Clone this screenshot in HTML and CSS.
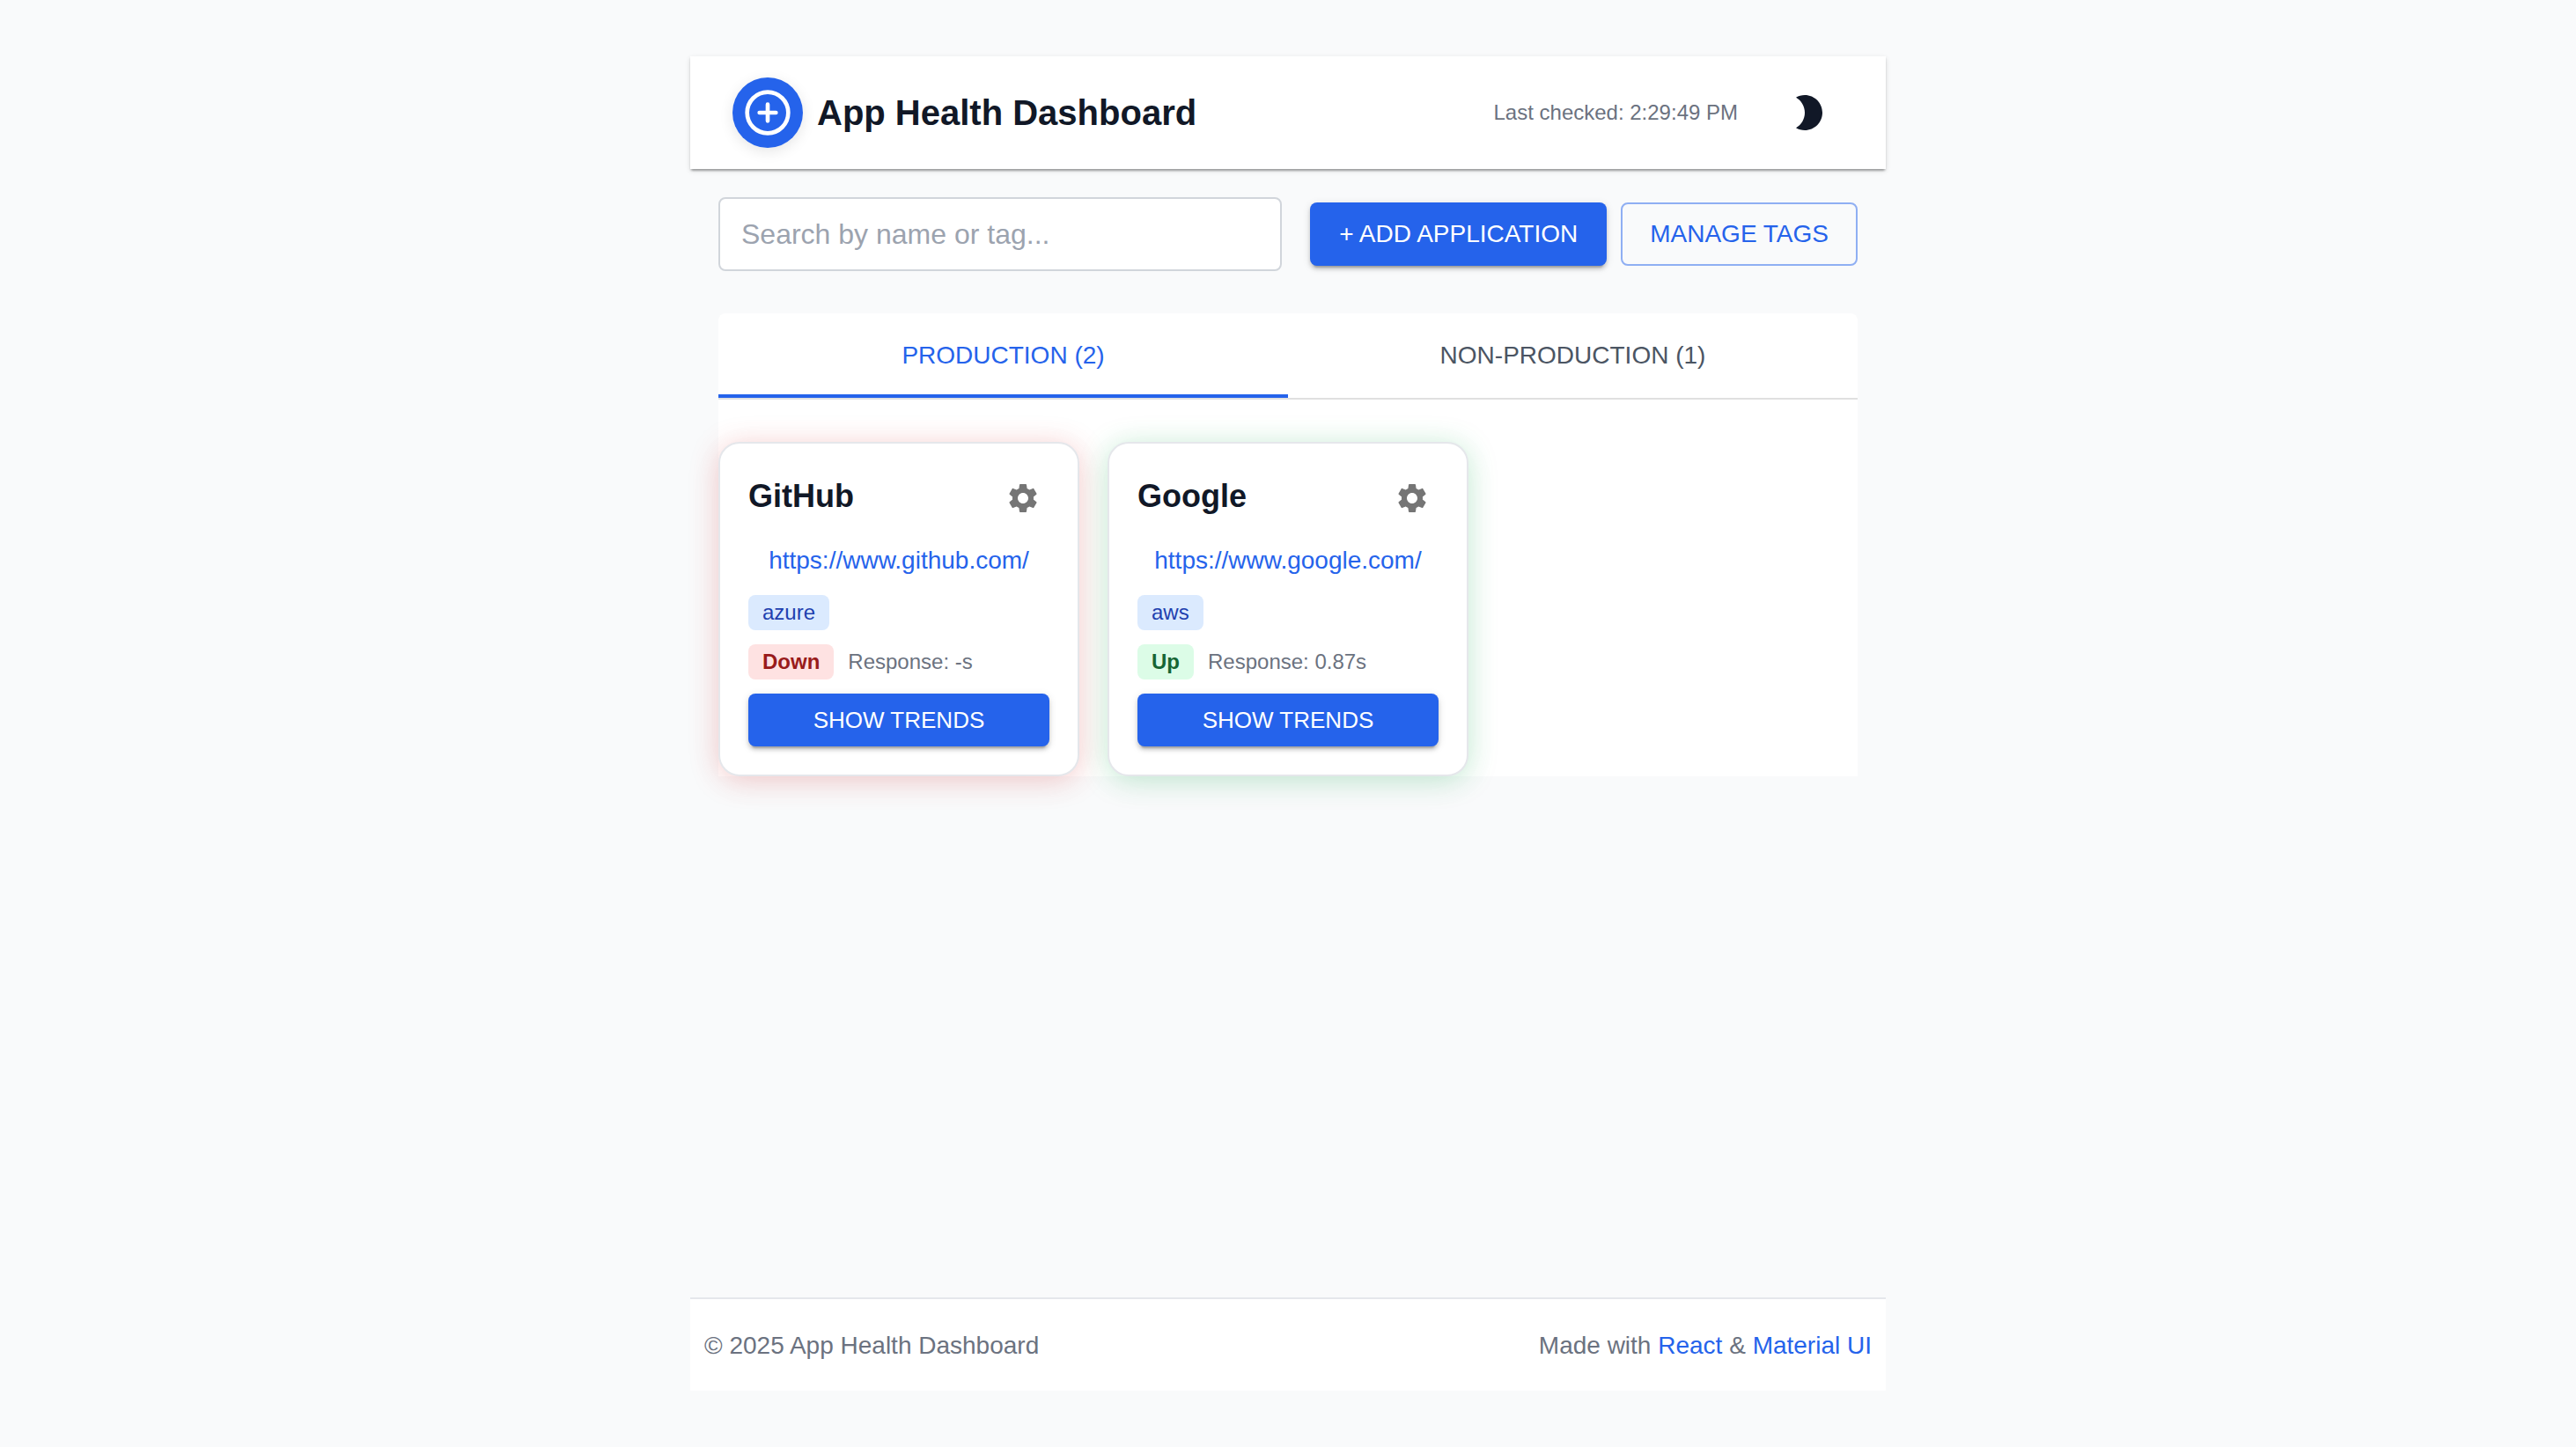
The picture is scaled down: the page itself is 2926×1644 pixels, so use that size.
FILE: index.html
```html
<!DOCTYPE html>
<html lang="en">
<head>
  <meta charset="utf-8">
  <meta name="viewport" content="width=device-width, initial-scale=1">
  <title>App Health Dashboard</title>
  <link rel="stylesheet" href="styles.css">
</head>
<body>
  <div class="app">
    <header class="app-bar">
      <div class="brand">
        <span class="brand-logo">
          <svg class="brand-icon" viewBox="0 0 24 24" fill="none" stroke="currentColor" stroke-width="2" stroke-linecap="round" aria-hidden="true">
            <circle cx="12" cy="12" r="10"/>
            <path d="M12 8v8M8 12h8"/>
          </svg>
        </span>
        <h1 class="brand-title">App Health Dashboard</h1>
      </div>
      <div class="app-bar-status">
        <span class="last-checked">Last checked: 2:29:49 PM</span>
        <button class="icon-button" type="button" aria-label="Toggle dark mode">
          <svg class="icon" viewBox="0 0 24 24" fill="currentColor" aria-hidden="true">
            <path d="M10 2c-1.82 0-3.53.5-5 1.35C7.99 5.08 10 8.3 10 12s-2.01 6.92-5 8.65C6.47 21.5 8.18 22 10 22c5.52 0 10-4.48 10-10S15.52 2 10 2z"/>
          </svg>
        </button>
      </div>
    </header>

    <main class="content">
      <div class="toolbar">
        <input class="search" type="search" placeholder="Search by name or tag..." aria-label="Search by name or tag">
        <div class="toolbar-actions">
          <button class="button button-contained" type="button">+ ADD APPLICATION</button>
          <button class="button button-outlined" type="button">MANAGE TAGS</button>
        </div>
      </div>

      <section class="panel">
        <div class="tabs" role="tablist">
          <button class="tab tab-selected" type="button" role="tab" aria-selected="true">PRODUCTION (2)</button>
          <button class="tab" type="button" role="tab" aria-selected="false">NON-PRODUCTION (1)</button>
        </div>

        <div class="cards" role="tabpanel">
          <article class="card card-down">
            <div class="card-header">
              <h2 class="card-title">GitHub</h2>
              <button class="icon-button icon-button-small" type="button" aria-label="GitHub settings">
                <svg class="icon icon-small" viewBox="0 0 24 24" fill="currentColor" aria-hidden="true">
                  <path d="M19.14 12.94c.04-.3.06-.61.06-.94 0-.32-.02-.64-.07-.94l2.03-1.58c.18-.14.23-.41.12-.61l-1.92-3.32c-.12-.22-.37-.29-.59-.22l-2.39.96c-.5-.38-1.03-.7-1.62-.94l-.36-2.54c-.04-.24-.24-.41-.48-.41h-3.84c-.24 0-.43.17-.47.41l-.36 2.54c-.59.24-1.13.57-1.62.94l-2.39-.96c-.22-.08-.47 0-.59.22L2.74 8.87c-.12.21-.08.47.12.61l2.03 1.58c-.05.3-.09.63-.09.94s.02.64.07.94l-2.03 1.58c-.18.14-.23.41-.12.61l1.92 3.32c.12.22.37.29.59.22l2.39-.96c.5.38 1.03.7 1.62.94l.36 2.54c.05.24.24.41.48.41h3.84c.24 0 .44-.17.47-.41l.36-2.54c.59-.24 1.13-.56 1.62-.94l2.39.96c.22.08.47 0 .59-.22l1.92-3.32c.12-.22.07-.47-.12-.61l-2.01-1.58zM12 15.6c-1.98 0-3.6-1.62-3.6-3.6s1.62-3.6 3.6-3.6 3.6 1.62 3.6 3.6-1.62 3.6-3.6 3.6z"/>
                </svg>
              </button>
            </div>
            <a class="card-link" href="https://www.github.com/">https://www.github.com/</a>
            <div class="card-row"><span class="chip chip-tag">azure</span></div>
            <div class="card-row">
              <span class="chip chip-down">Down</span>
              <span class="response">Response: -s</span>
            </div>
            <button class="button button-contained button-compact" type="button">SHOW TRENDS</button>
          </article>

          <article class="card card-up">
            <div class="card-header">
              <h2 class="card-title">Google</h2>
              <button class="icon-button icon-button-small" type="button" aria-label="Google settings">
                <svg class="icon icon-small" viewBox="0 0 24 24" fill="currentColor" aria-hidden="true">
                  <path d="M19.14 12.94c.04-.3.06-.61.06-.94 0-.32-.02-.64-.07-.94l2.03-1.58c.18-.14.23-.41.12-.61l-1.92-3.32c-.12-.22-.37-.29-.59-.22l-2.39.96c-.5-.38-1.03-.7-1.62-.94l-.36-2.54c-.04-.24-.24-.41-.48-.41h-3.84c-.24 0-.43.17-.47.41l-.36 2.54c-.59.24-1.13.57-1.62.94l-2.39-.96c-.22-.08-.47 0-.59.22L2.74 8.87c-.12.21-.08.47.12.61l2.03 1.58c-.05.3-.09.63-.09.94s.02.64.07.94l-2.03 1.58c-.18.14-.23.41-.12.61l1.92 3.32c.12.22.37.29.59.22l2.39-.96c.5.38 1.03.7 1.62.94l.36 2.54c.05.24.24.41.48.41h3.84c.24 0 .44-.17.47-.41l.36-2.54c.59-.24 1.13-.56 1.62-.94l2.39.96c.22.08.47 0 .59-.22l1.92-3.32c.12-.22.07-.47-.12-.61l-2.01-1.58zM12 15.6c-1.98 0-3.6-1.62-3.6-3.6s1.62-3.6 3.6-3.6 3.6 1.62 3.6 3.6-1.62 3.6-3.6 3.6z"/>
                </svg>
              </button>
            </div>
            <a class="card-link" href="https://www.google.com/">https://www.google.com/</a>
            <div class="card-row"><span class="chip chip-tag">aws</span></div>
            <div class="card-row">
              <span class="chip chip-up">Up</span>
              <span class="response">Response: 0.87s</span>
            </div>
            <button class="button button-contained button-compact" type="button">SHOW TRENDS</button>
          </article>
        </div>
      </section>
    </main>

    <footer class="footer">
      <p class="footer-text">© 2025 App Health Dashboard</p>
      <p class="footer-text">Made with <a class="footer-link" href="https://react.dev/">React</a> &amp; <a class="footer-link" href="https://mui.com/">Material UI</a></p>
    </footer>
  </div>
</body>
</html>
```
FILE: styles.css
```css
*,
*::before,
*::after {
  box-sizing: border-box;
}

:root {
  --primary: #2563eb;
  --ink: #111827;
  --muted: #6b7280;
  --line: #e5e7eb;
  --surface: #ffffff;
  --page: #f9fafb;
}

body {
  margin: 0;
  background: var(--page);
  color: var(--ink);
  font-family: "Liberation Sans", Arial, Helvetica, sans-serif;
  font-size: 28px;
  line-height: 40px;
}

h1,
h2,
p {
  margin: 0;
}

button,
input {
  font-family: inherit;
}

button {
  cursor: pointer;
}

.app {
  display: flex;
  flex-direction: column;
  max-width: 1358px;
  min-height: 100vh;
  margin: 0 auto;
  padding: 64px 0;
}

/* Header */

.app-bar {
  display: flex;
  align-items: center;
  justify-content: space-between;
  padding: 24px 48px;
  background: var(--surface);
  box-shadow:
    0 4px 2px -2px rgba(0, 0, 0, 0.2),
    0 2px 2px 0 rgba(0, 0, 0, 0.14),
    0 2px 6px 0 rgba(0, 0, 0, 0.12);
}

.brand {
  display: flex;
  align-items: center;
  gap: 16px;
}

.brand-logo {
  display: flex;
  align-items: center;
  justify-content: center;
  width: 80px;
  height: 80px;
  border-radius: 50%;
  background: var(--primary);
  color: #ffffff;
  box-shadow: 0 4px 16px rgba(0, 0, 0, 0.1);
}

.brand-icon {
  width: 56px;
  height: 56px;
}

.brand-title {
  font-size: 40px;
  font-weight: 700;
  line-height: 48px;
}

.app-bar-status {
  display: flex;
  align-items: center;
  gap: 40px;
}

.last-checked,
.response {
  color: var(--muted);
  font-size: 24px;
}

.icon-button {
  display: flex;
  padding: 16px;
  border: 0;
  border-radius: 50%;
  background: transparent;
  color: var(--ink);
}

.icon-button-small {
  padding: 10px;
  color: #757575;
}

.icon {
  width: 48px;
  height: 48px;
}

.icon-small {
  width: 40px;
  height: 40px;
}

/* Toolbar */

.content {
  flex: 1;
  padding: 32px;
}

.toolbar {
  display: flex;
  align-items: center;
  gap: 32px;
  margin-bottom: 48px;
}

.search {
  flex: 1;
  min-width: 0;
  height: 84px;
  padding: 0 24px;
  border: 2px solid #d1d5db;
  border-radius: 8px;
  background: var(--surface);
  color: var(--ink);
  font-size: 32px;
  appearance: none;
}

.search::placeholder {
  color: #9ca3af;
  opacity: 1;
}

.toolbar-actions {
  display: flex;
  gap: 16px;
}

.button {
  padding: 16px 33px;
  border: 0;
  border-radius: 8px;
  font-size: 28px;
  line-height: 40px;
}

.button-contained {
  background: var(--primary);
  color: #ffffff;
  box-shadow:
    0 6px 2px -4px rgba(0, 0, 0, 0.2),
    0 4px 4px 0 rgba(0, 0, 0, 0.14),
    0 2px 10px 0 rgba(0, 0, 0, 0.12);
}

.button-outlined {
  padding: 14px 31px;
  border: 2px solid rgba(37, 99, 235, 0.5);
  background: transparent;
  color: var(--primary);
}

.button-compact {
  padding: 10px 16px;
  font-size: 26px;
}

/* Tabs */

.panel {
  border-radius: 8px 8px 0 0;
  background: var(--surface);
}

.tabs {
  display: grid;
  grid-template-columns: 1fr 1fr;
  border-bottom: 2px solid #e0e0e0;
}

.tab {
  padding: 28px 32px 24px;
  border: 0;
  border-bottom: 4px solid transparent;
  background: transparent;
  color: #4b5563;
  font-size: 28px;
  line-height: 40px;
}

.tab-selected {
  border-bottom-color: var(--primary);
  color: var(--primary);
}

/* Cards */

.cards {
  display: grid;
  grid-template-columns: repeat(3, 1fr);
  gap: 32px;
  padding-top: 48px;
}

.card {
  display: flex;
  flex-direction: column;
  gap: 16px;
  padding: 32px;
  border: 2px solid var(--line);
  border-radius: 24px;
  background: var(--surface);
}

.card-down {
  box-shadow:
    0 8px 48px rgba(0, 0, 0, 0.03),
    0 4px 32px rgba(239, 68, 68, 0.25);
}

.card-up {
  box-shadow:
    0 8px 48px rgba(0, 0, 0, 0.03),
    0 4px 32px rgba(34, 197, 94, 0.25);
}

.card-header {
  display: flex;
  align-items: flex-start;
  justify-content: space-between;
}

.card-title {
  font-size: 36px;
  font-weight: 700;
  line-height: 56px;
}

.card-link {
  padding-top: 2px;
  color: var(--primary);
  line-height: 46px;
  text-align: center;
  text-decoration: none;
}

.card-row {
  display: flex;
  align-items: center;
  gap: 16px;
}

.chip {
  padding: 0 16px;
  border-radius: 8px;
  font-size: 24px;
}

.chip-tag {
  background: #dbeafe;
  color: #1e40af;
}

.chip-down {
  background: #fee2e2;
  color: #991b1b;
  font-weight: 700;
}

.chip-up {
  background: #dcfce7;
  color: #166534;
  font-weight: 700;
}

/* Footer */

.footer {
  display: flex;
  align-items: center;
  justify-content: space-between;
  padding: 33px 16px 31px;
  border-top: 2px solid var(--line);
  background: var(--surface);
}

.footer-text {
  color: var(--muted);
}

.footer-link {
  color: var(--primary);
  text-decoration: none;
}
```
